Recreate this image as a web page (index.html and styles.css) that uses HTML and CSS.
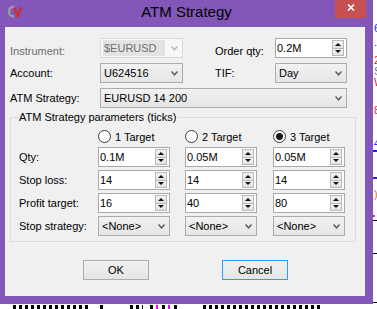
FILE: index.html
```html
<!DOCTYPE html>
<html lang="en">
<head>
    <meta charset="UTF-8">
    <meta name="viewport" content="width=device-width, initial-scale=1.0">
    <title>ATM Strategy</title>
    <link rel="stylesheet" href="styles.css">
</head>
<body>
    <div class="window">
        <div class="titlebar">
            <svg class="app-icon" viewBox="0 0 15 13">
                <path d="M6 1.5 A5 5 0 1 0 6 11.5" fill="none" stroke="#9b9b9b" stroke-width="2.4"/>
                <path d="M6.5 3 L9.6 11 L13.5 2" fill="none" stroke="#d42a2a" stroke-width="2.2"/>
            </svg>
            <div class="title">ATM Strategy</div>
            <div class="close">
                <svg class="close-x" viewBox="0 0 8 7"><path d="M1 0.5 L7 6.5 M7 0.5 L1 6.5" stroke="#fff" stroke-width="1.6"/></svg>
            </div>
        </div>

        <div class="client">
            <div class="top-grid">
                <label class="lbl lbl-disabled lbl-low">Instrument:</label>
                <div class="combo combo-disabled">
                    <span class="combo-sel">$EURUSD</span>
                    <svg class="chev" viewBox="0 0 7 5"><path d="M0.5 0.5 L3.5 3.8 L6.5 0.5"/></svg>
                </div>
                <span></span>
                <label class="lbl lbl-low">Order qty:</label>
                <div class="spin">
                    <span class="spin-val">0.2M</span>
                    <span class="spin-btns"><span class="spin-up"></span><span class="spin-down"></span></span>
                </div>

                <label class="lbl">Account:</label>
                <div class="combo">
                    <span>U624516</span>
                    <svg class="chev" viewBox="0 0 7 5"><path d="M0.5 0.5 L3.5 3.8 L6.5 0.5"/></svg>
                </div>
                <span></span>
                <label class="lbl">TIF:</label>
                <div class="combo">
                    <span>Day</span>
                    <svg class="chev" viewBox="0 0 7 5"><path d="M0.5 0.5 L3.5 3.8 L6.5 0.5"/></svg>
                </div>

                <label class="lbl">ATM Strategy:</label>
                <div class="combo combo-wide">
                    <span>EURUSD 14 200</span>
                    <svg class="chev" viewBox="0 0 7 5"><path d="M0.5 0.5 L3.5 3.8 L6.5 0.5"/></svg>
                </div>
            </div>

            <div class="group">
                <div class="group-title">ATM Strategy parameters (ticks)</div>
                <div class="param-grid">
                    <span></span>
                    <label class="radio"><span class="radio-dot"></span>1 Target</label>
                    <label class="radio"><span class="radio-dot"></span>2 Target</label>
                    <label class="radio"><span class="radio-dot checked"></span>3 Target</label>

                    <label class="lbl">Qty:</label>
                    <div class="spin"><span class="spin-val">0.1M</span><span class="spin-btns"><span class="spin-up"></span><span class="spin-down"></span></span></div>
                    <div class="spin"><span class="spin-val">0.05M</span><span class="spin-btns"><span class="spin-up"></span><span class="spin-down"></span></span></div>
                    <div class="spin"><span class="spin-val">0.05M</span><span class="spin-btns"><span class="spin-up"></span><span class="spin-down"></span></span></div>

                    <label class="lbl">Stop loss:</label>
                    <div class="spin"><span class="spin-val">14</span><span class="spin-btns"><span class="spin-up"></span><span class="spin-down"></span></span></div>
                    <div class="spin"><span class="spin-val">14</span><span class="spin-btns"><span class="spin-up"></span><span class="spin-down"></span></span></div>
                    <div class="spin"><span class="spin-val">14</span><span class="spin-btns"><span class="spin-up"></span><span class="spin-down"></span></span></div>

                    <label class="lbl">Profit target:</label>
                    <div class="spin"><span class="spin-val">16</span><span class="spin-btns"><span class="spin-up"></span><span class="spin-down"></span></span></div>
                    <div class="spin"><span class="spin-val">40</span><span class="spin-btns"><span class="spin-up"></span><span class="spin-down"></span></span></div>
                    <div class="spin"><span class="spin-val">80</span><span class="spin-btns"><span class="spin-up"></span><span class="spin-down"></span></span></div>

                    <label class="lbl">Stop strategy:</label>
                    <div class="combo"><span>&lt;None&gt;</span><svg class="chev" viewBox="0 0 7 5"><path d="M0.5 0.5 L3.5 3.8 L6.5 0.5"/></svg></div>
                    <div class="combo"><span>&lt;None&gt;</span><svg class="chev" viewBox="0 0 7 5"><path d="M0.5 0.5 L3.5 3.8 L6.5 0.5"/></svg></div>
                    <div class="combo"><span>&lt;None&gt;</span><svg class="chev" viewBox="0 0 7 5"><path d="M0.5 0.5 L3.5 3.8 L6.5 0.5"/></svg></div>
                </div>
            </div>

            <div class="buttons">
                <button class="btn">OK</button>
                <button class="btn btn-focus">Cancel</button>
            </div>
        </div>
    </div>

    <!-- bit of the chart window behind the dialog -->
    <div class="chart-edge">
        <span class="ce ce-blue ce-a">6</span>
        <span class="ce ce-blue ce-b">..</span>
        <span class="ce ce-red ce-c">2</span>
        <span class="ce ce-grey ce-d">S</span>
        <span class="ce ce-red ce-e">W</span>
        <span class="ce ce-red ce-f">8</span>
        <span class="ce ce-blue ce-g">4</span>
        <span class="ce-line ce-line-blue ce-h"></span>
        <span class="ce-line ce-line-blue ce-i"></span>
        <span class="ce ce-orange ce-j">)</span>
        <span class="ce-line ce-line-pink ce-k"></span>
        <span class="ce-line ce-l"></span>
        <span class="ce-line ce-m"></span>
        <span class="ce-line ce-n"></span>
    </div>
    <div class="ticks">
        <span class="tk-gap gap-13"></span>
        <span class="tk-run run-78"></span>
        <span class="tk-gap gap-9"></span>
        <span class="tk-run run-3"></span>
        <span class="tk-gap gap-27"></span>
        <span class="tk-run run-13"></span>
        <span class="tk-gap gap-7"></span>
        <span class="tk-run tk-pink run-30"></span>
        <span class="tk-gap gap-23"></span>
        <span class="tk-run run-117"></span>
    </div>
</body>
</html>
```

FILE: styles.css
```css
body
{
    margin: 0;
    width: 377px;
    height: 309px;
    overflow: hidden;
    background-color: #fff;
    font-family: "Liberation Sans", Arial, sans-serif;
    font-size: 11px;
    color: #000;
    display: grid;
    grid-template-columns: 373px 4px;
    grid-template-rows: 304px 5px;
}

/* dialog frame */
.window
{
    background-color: #8257b7;
    display: flex;
    flex-direction: column;
}

.titlebar
{
    height: 27px;
    display: grid;
    grid-template-columns: 1fr auto 1fr;
    align-items: start;
}

.app-icon
{
    width: 15px;
    height: 13px;
    margin: 5px 0 0 8px;
}

.title
{
    font-size: 15px;
    line-height: 24px;
    color: #000;
}

.close
{
    justify-self: end;
    margin-right: 7px;
    width: 31px;
    height: 18px;
    background-color: #c75050;
    display: flex;
    align-items: center;
    justify-content: center;
}

.close-x
{
    width: 8px;
    height: 7px;
    margin-top: -3px;
}

.client
{
    margin: 0 8px 0 5px;
    height: 269px;
    background-color: #f0f0f0;
}

/* top fields */
.top-grid
{
    display: grid;
    grid-template-columns: 90px 83px 32px 60px 72px;
    grid-auto-rows: 20px;
    row-gap: 5px;
    padding: 11px 0 0 5px;
}

.lbl
{
    align-self: center;
    white-space: nowrap;
}

.lbl-low
{
    padding-top: 5px;
}

.lbl-disabled
{
    color: #6d6d6d;
}

.combo
{
    box-sizing: border-box;
    height: 20px;
    border: 1px solid #acacac;
    background: linear-gradient(#f2f2f2, #e5e5e5);
    display: flex;
    align-items: center;
    justify-content: space-between;
    padding: 0 4px 0 3px;
    white-space: nowrap;
}

.combo-wide
{
    grid-column: 2 / 6;
}

.combo-disabled
{
    border-color: #d9d9d9;
    background: #f7f7f7;
    color: #6d6d6d;
    padding-left: 2px;
}

.combo-sel
{
    background-color: #e3e3e3;
    padding: 2px 8px 2px 1px;
}

.chev
{
    width: 7px;
    height: 5px;
    fill: none;
    stroke: #5c5c5c;
    stroke-width: 1.5;
}

.combo-disabled .chev
{
    stroke: #b8b8b8;
}

/* numeric up down */
.spin
{
    box-sizing: border-box;
    height: 20px;
    border: 1px solid #a9a9a9;
    background-color: #fff;
    display: flex;
    align-items: center;
}

.spin-val
{
    flex: 1;
    padding-left: 1px;
}

.spin-btns
{
    align-self: stretch;
    width: 12px;
    margin: 1px 2px 1px 0;
    display: flex;
    flex-direction: column;
}

.spin-up, .spin-down
{
    flex: 1;
    border: 1px solid #b9b9b9;
    background: linear-gradient(#f4f4f4, #e2e2e2);
    display: flex;
    align-items: center;
    justify-content: center;
}

.spin-down
{
    border-top: none;
}

.spin-up::after
{
    content: "";
    border-left: 3px solid transparent;
    border-right: 3px solid transparent;
    border-bottom: 3px solid #111;
}

.spin-down::after
{
    content: "";
    border-left: 3px solid transparent;
    border-right: 3px solid transparent;
    border-top: 3px solid #111;
}

/* group box */
.group
{
    box-sizing: border-box;
    width: 346px;
    margin: 9px 0 0 5px;
    border: 1px solid #dcdcdc;
}

.group-title
{
    width: max-content;
    margin: -7px 0 0 7px;
    padding: 0 1px;
    line-height: 13px;
    background-color: #f0f0f0;
}

.param-grid
{
    display: grid;
    grid-template-columns: 79px 87px 88px 72px;
    grid-template-rows: 14px repeat(4, 20px);
    row-gap: 3px;
    padding: 6px 0 5px 8px;
}

.radio
{
    display: flex;
    align-items: center;
    gap: 4px;
    margin-bottom: 1px;
    white-space: nowrap;
}

.radio-dot
{
    box-sizing: border-box;
    width: 13px;
    height: 13px;
    border: 1px solid #3c3c3c;
    border-radius: 50%;
    background-color: #fff;
    display: flex;
    align-items: center;
    justify-content: center;
}

.radio-dot.checked::after
{
    content: "";
    width: 7px;
    height: 7px;
    border-radius: 50%;
    background-color: #1a1a1a;
}

.param-grid .spin, .param-grid .combo
{
    width: 72px;
}

/* dialog buttons */
.buttons
{
    display: flex;
    gap: 73px;
    padding-left: 78px;
    margin-top: 18px;
}

.btn
{
    box-sizing: border-box;
    width: 66px;
    height: 20px;
    padding: 0;
    border: 1px solid #acacac;
    background: linear-gradient(#f0f0f0, #e5e5e5);
    font-family: inherit;
    font-size: 11px;
    color: #000;
}

.btn-focus
{
    border-color: #3399ff;
}

/* chart behind */
.chart-edge
{
    position: relative;
    overflow: hidden;
    background-color: #fff;
}

.ce
{
    position: absolute;
    left: 1px;
    font-size: 11px;
    line-height: 9px;
}

.ce-blue { color: #2020ff; }
.ce-red { color: #ff2020; }
.ce-grey { color: #707070; }
.ce-orange { color: #d08000; }

.ce-a { top: 24px; }
.ce-b { top: 38px; }
.ce-c { top: 56px; }
.ce-d { top: 67px; }
.ce-e { top: 78px; }
.ce-f { top: 106px; }
.ce-g { top: 139px; }
.ce-j { top: 190px; }

.ce-line
{
    position: absolute;
    left: 0;
    width: 4px;
    height: 1px;
    background-color: #000;
}

.ce-line-blue { background-color: #2020ff; height: 2px; }
.ce-line-pink { background-color: #ff2080; width: 2px; height: 2px; }

.ce-h { top: 150px; }
.ce-i { top: 177px; }
.ce-k { top: 215px; }
.ce-l { top: 220px; }
.ce-m { top: 253px; }
.ce-n { top: 302px; }

.ticks
{
    grid-column: 1 / 3;
    display: flex;
    padding-top: 1px;
}

.tk-run
{
    background: repeating-linear-gradient(90deg, #000 0 3px, transparent 3px 6px);
}

.tk-pink
{
    background: repeating-linear-gradient(90deg, #000 0 3px, transparent 3px 6px, #ff00ff 6px 8px, transparent 8px 12px);
}

.gap-7 { width: 7px; }
.gap-9 { width: 9px; }
.gap-13 { width: 13px; }
.gap-23 { width: 23px; }
.gap-27 { width: 27px; }
.run-3 { width: 3px; }
.run-13 { width: 13px; }
.run-30 { width: 30px; }
.run-78 { width: 78px; }
.run-117 { width: 117px; }
```
